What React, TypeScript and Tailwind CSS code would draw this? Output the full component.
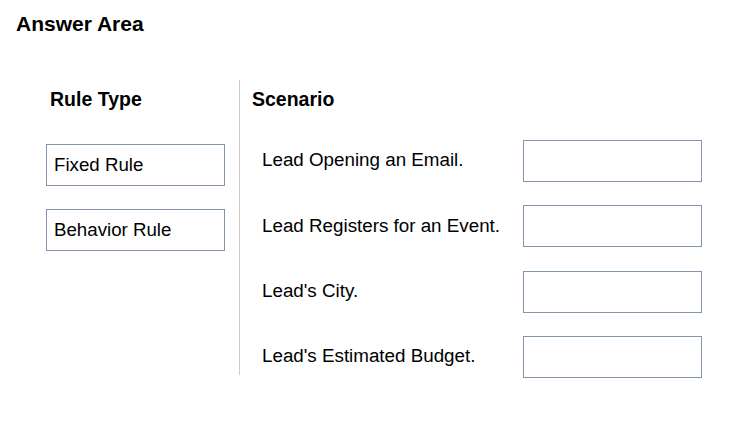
import React from 'react';

const ruleTypes = ['Fixed Rule', 'Behavior Rule'];

const scenarios = [
  "Lead Opening an Email.",
  "Lead Registers for an Event.",
  "Lead's City.",
  "Lead's Estimated Budget.",
];

const App: React.FC = () => {
  return (
    <div className="w-[751px] h-[436px] bg-white text-black font-['Arial','Liberation_Sans',sans-serif]">
      <h1 className="pl-[16px] pt-[12px] text-[21px] leading-[24px] font-bold">Answer Area</h1>

      <div className="flex mt-[44px]">
        {/* Rule types */}
        <div className="w-[239px] shrink-0 pl-[46px] pt-[7px]">
          <h2 className="pl-[4px] text-[19.5px] leading-[24px] font-bold">Rule Type</h2>
          <div className="mt-[33px] flex flex-col gap-[23px]">
            {ruleTypes.map(rule => (
              <div
                key={rule}
                className="w-[179px] h-[42px] border border-[#8295ad] flex items-center pl-[7px] text-[18.7px]"
              >
                {rule}
              </div>
            ))}
          </div>
        </div>

        <div className="w-px shrink-0 h-[295px] bg-[#cdcdcd]" />

        {/* Scenarios */}
        <div className="pl-[12px] pt-[7px]">
          <h2 className="text-[19.5px] leading-[24px] font-bold">Scenario</h2>
          <div className="mt-[29px] flex flex-col gap-[23.3px] pl-[10px]">
            {scenarios.map(s => (
              <div key={s} className="flex items-center h-[42px]">
                <span className="w-[261px] shrink-0 text-[18.8px] -mt-[1px]">{s}</span>
                <div className="w-[179px] shrink-0 h-[42px] border border-[#8295ad]" />
              </div>
            ))}
          </div>
        </div>
      </div>
    </div>
  );
};

export default App;
